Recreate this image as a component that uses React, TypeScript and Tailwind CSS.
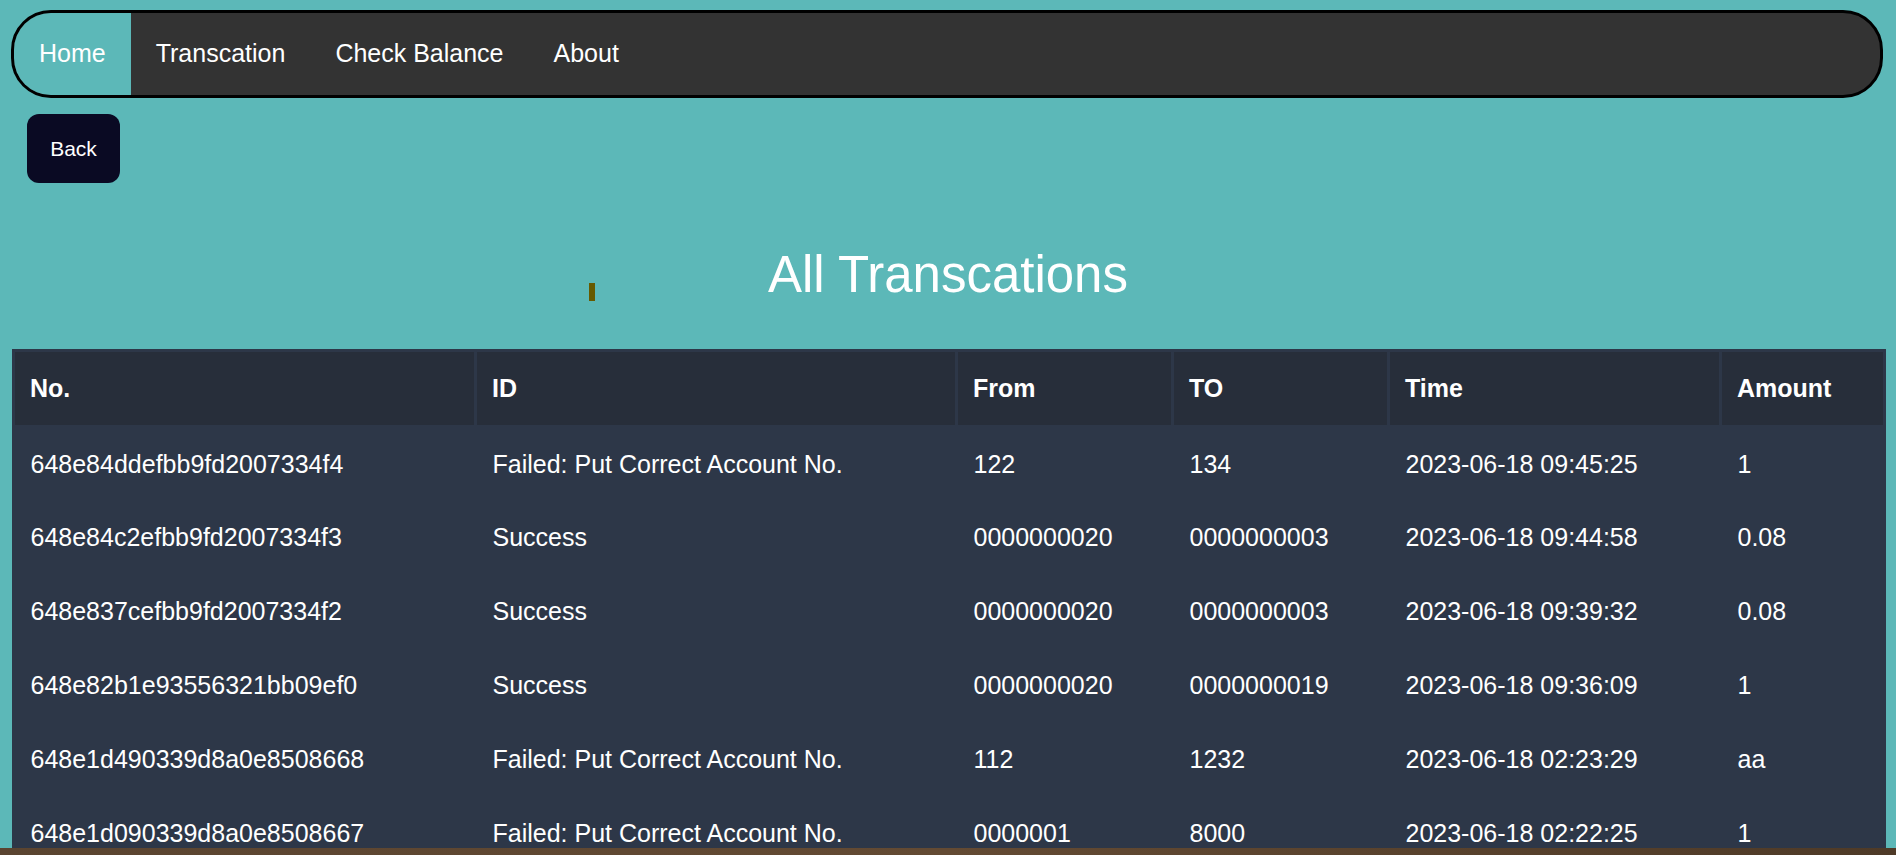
import React from 'react';

const navItems = ['Home', 'Transcation', 'Check Balance', 'About'];

const rows = [
  ['648e84ddefbb9fd2007334f4', 'Failed: Put Correct Account No.', '122', '134', '2023-06-18 09:45:25', '1'],
  ['648e84c2efbb9fd2007334f3', 'Success', '0000000020', '0000000003', '2023-06-18 09:44:58', '0.08'],
  ['648e837cefbb9fd2007334f2', 'Success', '0000000020', '0000000003', '2023-06-18 09:39:32', '0.08'],
  ['648e82b1e93556321bb09ef0', 'Success', '0000000020', '0000000019', '2023-06-18 09:36:09', '1'],
  ['648e1d490339d8a0e8508668', 'Failed: Put Correct Account No.', '112', '1232', '2023-06-18 02:23:29', 'aa'],
  ['648e1d090339d8a0e8508667', 'Failed: Put Correct Account No.', '0000001', '8000', '2023-06-18 02:22:25', '1'],
];

const heads = ['No.', 'ID', 'From', 'TO', 'Time', 'Amount'];

const Navbar = () => (
  <nav className="ml-[11px] mr-[13px] mt-[10px] h-[88px] flex items-stretch overflow-hidden rounded-[40px] border-[3px] border-black bg-[#333333]">
    {navItems.map((item, i) => (
      <a
        key={item}
        href="#"
        className={`flex items-center px-[25px] text-[25px] text-white ${i === 0 ? 'bg-[#5cb8b8]' : ''}`}
      >
        {item}
      </a>
    ))}
  </nav>
);

export default function App() {
  return (
    <div className="font-['Liberation_Sans',Arial,sans-serif]">
      <div className="h-[848px] overflow-hidden bg-[#5cb8b8]">
        <Navbar />
        <button className="ml-[27px] mt-[16px] h-[69px] w-[93px] rounded-[12px] bg-[#0a0a23] text-[21px] text-white">
          Back
        </button>
        <div className="relative mt-[63px] h-[57px]">
          <span className="absolute left-[589px] top-[37px] h-[18px] w-[6px] bg-[#665a00]" />
          <h1 className="text-center text-[51px] leading-[57px] text-white">All Transcations</h1>
        </div>
        <div className="mt-[46px] ml-[12px] mr-[13px]">
          <table className="w-full table-fixed border-collapse bg-[#2d3748] text-left text-white">
            <colgroup>
              <col className="w-[462px]" />
              <col className="w-[481px]" />
              <col className="w-[216px]" />
              <col className="w-[216px]" />
              <col className="w-[332px]" />
              <col className="w-[164px]" />
            </colgroup>
            <thead>
              <tr>
                {heads.map((h) => (
                  <th
                    key={h}
                    className="h-[76px] border-[3px] border-[#2d3748] bg-[#272e3a] px-[15px] text-[25px] font-bold"
                  >
                    {h}
                  </th>
                ))}
              </tr>
            </thead>
            <tbody>
              {rows.map((r) => (
                <tr key={r[0]}>
                  {r.map((c, j) => (
                    <td key={j} className="h-[74px] px-[17px] text-[25px] whitespace-nowrap">
                      {c}
                    </td>
                  ))}
                </tr>
              ))}
            </tbody>
          </table>
        </div>
      </div>
      <div className="h-[7px] bg-gradient-to-r from-[#5a4430] via-[#634a33] to-[#4e3a27]" />
    </div>
  );
}
